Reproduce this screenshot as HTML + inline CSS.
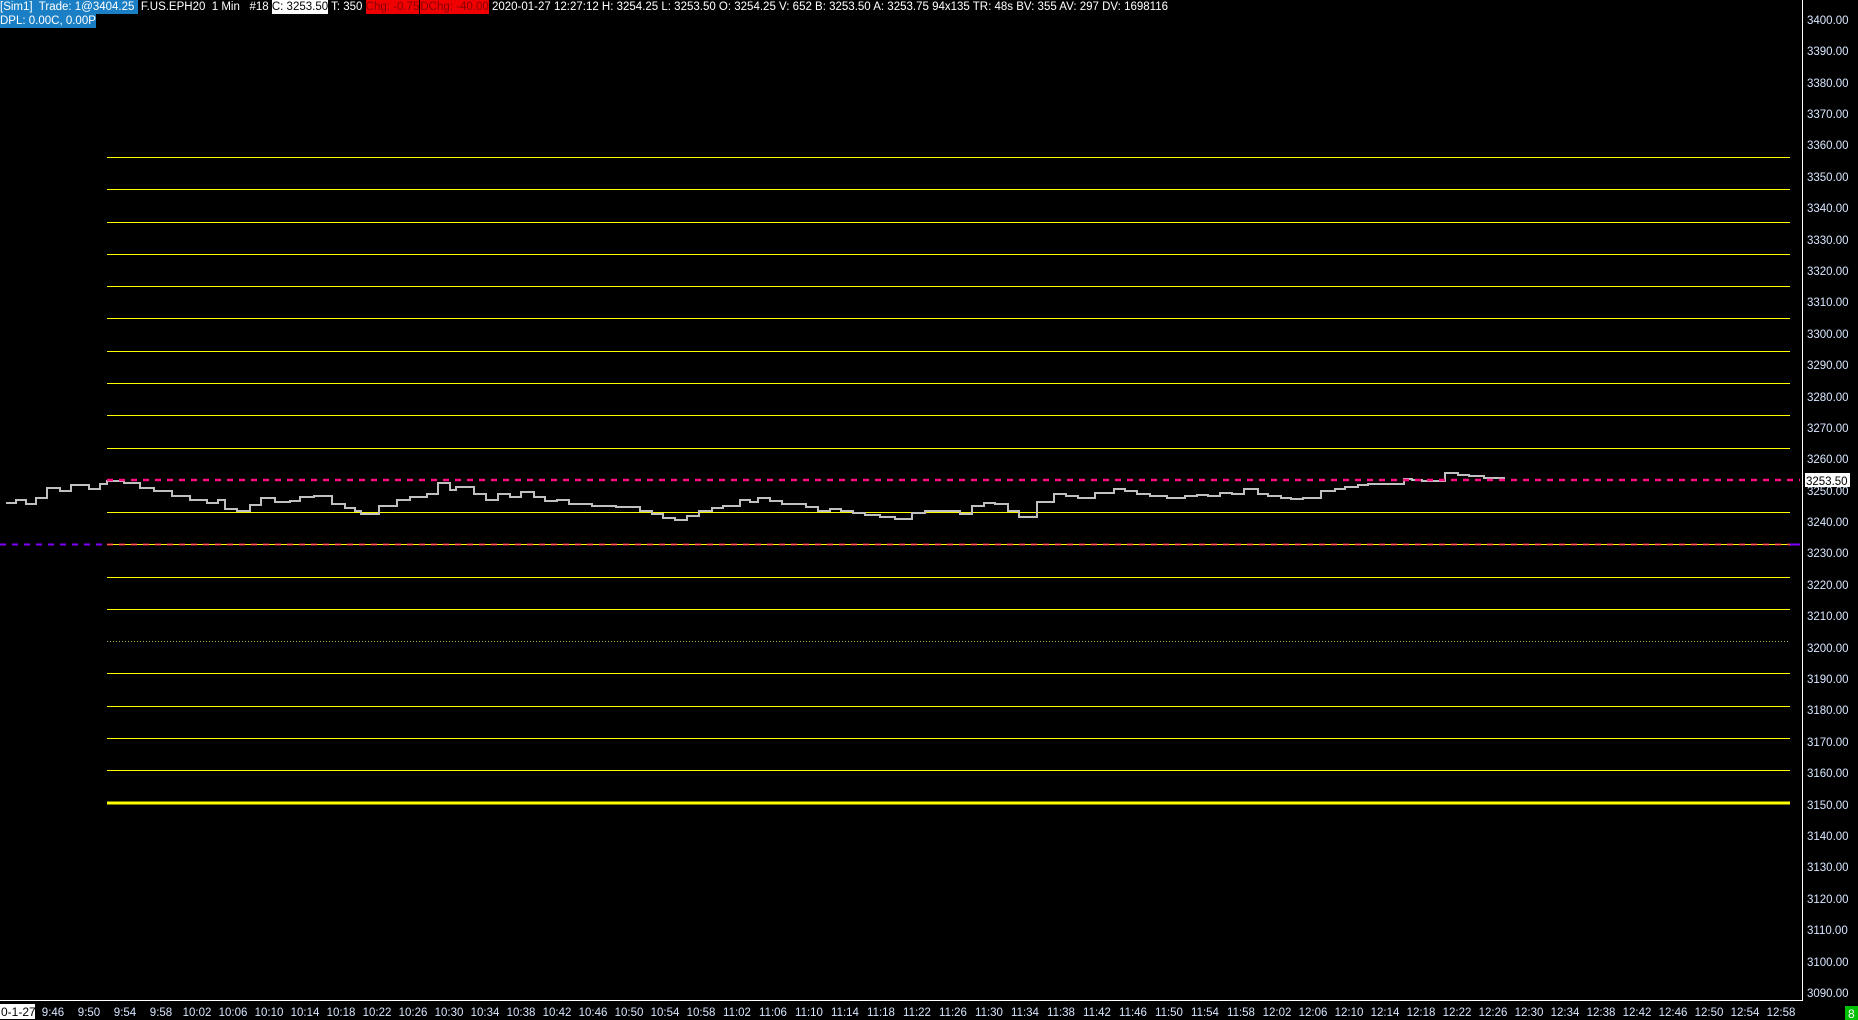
<!DOCTYPE html>
<html><head><meta charset="utf-8"><style>
html,body{margin:0;padding:0;background:#000;width:1858px;height:1020px;overflow:hidden}
svg{display:block}
text{font-family:"Liberation Sans",sans-serif}
.hd{position:absolute;left:0;top:0;font:11.5px "Liberation Sans",sans-serif;color:#fff;white-space:pre;line-height:14px}
.hd span{display:inline-block}
.b{background:#1a7fc4}
.w{background:#fff;color:#000}
.r{background:#f00000;color:#8a0000}
</style></head><body>
<svg width="1858" height="1020" xmlns="http://www.w3.org/2000/svg">
<rect width="1858" height="1020" fill="#000"/>
<g stroke="#ffff00" stroke-width="1" shape-rendering="crispEdges">
<line x1="107" x2="1790" y1="157.5" y2="157.5"/>
<line x1="107" x2="1790" y1="189.5" y2="189.5"/>
<line x1="107" x2="1790" y1="222.5" y2="222.5"/>
<line x1="107" x2="1790" y1="254.5" y2="254.5"/>
<line x1="107" x2="1790" y1="286.5" y2="286.5"/>
<line x1="107" x2="1790" y1="318.5" y2="318.5"/>
<line x1="107" x2="1790" y1="351.5" y2="351.5"/>
<line x1="107" x2="1790" y1="383.5" y2="383.5"/>
<line x1="107" x2="1790" y1="415.5" y2="415.5"/>
<line x1="107" x2="1790" y1="448.5" y2="448.5"/>
<line x1="107" x2="1790" y1="512.5" y2="512.5"/>
<line x1="107" x2="1790" y1="544.5" y2="544.5"/>
<line x1="107" x2="1790" y1="577.5" y2="577.5"/>
<line x1="107" x2="1790" y1="609.5" y2="609.5"/>
<line x1="107" x2="1790" y1="641.5" y2="641.5" stroke="#b0b040" stroke-dasharray="1 2"/>
<line x1="107" x2="1790" y1="673.5" y2="673.5"/>
<line x1="107" x2="1790" y1="706.5" y2="706.5"/>
<line x1="107" x2="1790" y1="738.5" y2="738.5"/>
<line x1="107" x2="1790" y1="770.5" y2="770.5"/>
<line x1="107" x2="1790" y1="803" y2="803" stroke-width="3"/>
</g>
<line x1="107" x2="1795" y1="544.5" y2="544.5" stroke="#ff3060" stroke-width="2" stroke-dasharray="6 6" opacity="0.8"/>
<line x1="0" x2="107" y1="544.5" y2="544.5" stroke="#8000ff" stroke-width="2" stroke-dasharray="6 6"/>
<line x1="1790" x2="1800" y1="544.5" y2="544.5" stroke="#8000ff" stroke-width="2"/>
<path d="M6 503H16V500H26V504H36V498H47V488H60V491H71V485H89V489H100V484H107V481H124V483H140V488H154V491H172V496H190V500H207V503H218V500H225V509H237V511H250V505H261V498H275V502H290V501H300V497H314V496H332V504H345V508H355V511H361V514H379V506H397V500H410V497H427V494H438V483H450V490H456V487H474V494H486V500H498V494H510V497H521V492H534V497H545V501H557V500H569V504H592V506H616V507H640V511H652V514H663V518H675V520H687V516H699V511H712V508H723V506H740V500H750V502H758V498H770V501H782V504H806V507H818V511H830V509H841V511H853V513H865V515H880V517H895V519H912V513H925V511H936V511H960V514H972V506H984V503H995V504H1008V511H1019V517H1037V502H1054V494H1066V496H1078V498H1095V493H1114V489H1125V491H1137V494H1150V496H1167V498H1185V496H1197V495H1208V496H1220V493H1232V494H1244V489H1258V494H1268V496H1281V498H1291V499H1303V498H1321V491H1335V489H1345V487H1358V485H1368V484H1392V484H1404V479H1412V480H1422V481H1445V473H1458V475H1469V476H1484V478H1499V478H1505" fill="none" stroke="#c0c0c0" stroke-width="2"/>
<line x1="107" x2="1800" y1="480" y2="480" stroke="#ff0a80" stroke-width="2.5" stroke-dasharray="6 6"/>
<line x1="1802.5" x2="1802.5" y1="0" y2="1000" stroke="#fff" stroke-width="1"/>
<line x1="0" x2="1803" y1="1000.5" y2="1000.5" stroke="#fff" stroke-width="1"/>
<g fill="#d8e6ff" font-size="11.5">
<text x="1807" y="24">3400.00</text><text x="1807" y="55">3390.00</text><text x="1807" y="87">3380.00</text><text x="1807" y="118">3370.00</text><text x="1807" y="149">3360.00</text><text x="1807" y="181">3350.00</text><text x="1807" y="212">3340.00</text><text x="1807" y="244">3330.00</text><text x="1807" y="275">3320.00</text><text x="1807" y="306">3310.00</text><text x="1807" y="338">3300.00</text><text x="1807" y="369">3290.00</text><text x="1807" y="401">3280.00</text><text x="1807" y="432">3270.00</text><text x="1807" y="463">3260.00</text><text x="1807" y="495">3250.00</text><text x="1807" y="526">3240.00</text><text x="1807" y="557">3230.00</text><text x="1807" y="589">3220.00</text><text x="1807" y="620">3210.00</text><text x="1807" y="652">3200.00</text><text x="1807" y="683">3190.00</text><text x="1807" y="714">3180.00</text><text x="1807" y="746">3170.00</text><text x="1807" y="777">3160.00</text><text x="1807" y="809">3150.00</text><text x="1807" y="840">3140.00</text><text x="1807" y="871">3130.00</text><text x="1807" y="903">3120.00</text><text x="1807" y="934">3110.00</text><text x="1807" y="966">3100.00</text><text x="1807" y="997">3090.00</text>
</g>
<rect x="1805" y="473" width="45" height="14" fill="#fff"/>
<text x="1806" y="485" font-size="11.5" fill="#000">3253.50</text>
<rect x="1845" y="1006" width="13" height="14" fill="#00c000"/>
<text x="1848" y="1018" font-size="12" fill="#fff">8</text>
<rect x="0" y="1004" width="35" height="15" fill="#fff"/>
<text x="1" y="1016" font-size="12" fill="#000">0-1-27</text>
<g fill="#d8e6ff" font-size="11.5" text-anchor="middle">
<text x="53" y="1016">9:46</text><text x="89" y="1016">9:50</text><text x="125" y="1016">9:54</text><text x="161" y="1016">9:58</text><text x="197" y="1016">10:02</text><text x="233" y="1016">10:06</text><text x="269" y="1016">10:10</text><text x="305" y="1016">10:14</text><text x="341" y="1016">10:18</text><text x="377" y="1016">10:22</text><text x="413" y="1016">10:26</text><text x="449" y="1016">10:30</text><text x="485" y="1016">10:34</text><text x="521" y="1016">10:38</text><text x="557" y="1016">10:42</text><text x="593" y="1016">10:46</text><text x="629" y="1016">10:50</text><text x="665" y="1016">10:54</text><text x="701" y="1016">10:58</text><text x="737" y="1016">11:02</text><text x="773" y="1016">11:06</text><text x="809" y="1016">11:10</text><text x="845" y="1016">11:14</text><text x="881" y="1016">11:18</text><text x="917" y="1016">11:22</text><text x="953" y="1016">11:26</text><text x="989" y="1016">11:30</text><text x="1025" y="1016">11:34</text><text x="1061" y="1016">11:38</text><text x="1097" y="1016">11:42</text><text x="1133" y="1016">11:46</text><text x="1169" y="1016">11:50</text><text x="1205" y="1016">11:54</text><text x="1241" y="1016">11:58</text><text x="1277" y="1016">12:02</text><text x="1313" y="1016">12:06</text><text x="1349" y="1016">12:10</text><text x="1385" y="1016">12:14</text><text x="1421" y="1016">12:18</text><text x="1457" y="1016">12:22</text><text x="1493" y="1016">12:26</text><text x="1529" y="1016">12:30</text><text x="1565" y="1016">12:34</text><text x="1601" y="1016">12:38</text><text x="1637" y="1016">12:42</text><text x="1673" y="1016">12:46</text><text x="1709" y="1016">12:50</text><text x="1745" y="1016">12:54</text><text x="1781" y="1016">12:58</text>
</g>
</svg>
<div class="hd"><span class="b">[Sim1]  Trade: 1@3404.25 </span><span> F.US.EPH20  1 Min   #18 </span><span class="w">C: 3253.50</span><span> T: 350 </span><span class="r">Chg: -0.75</span><span class="r" style="margin-left:1px">DChg: -40.00</span><span> 2020-01-27 12:27:12 H: 3254.25 L: 3253.50 O: 3254.25 V: 652 B: 3253.50 A: 3253.75 94x135 TR: 48s BV: 355 AV: 297 DV: 1698116</span><br><span class="b">DPL: 0.00C, 0.00P</span></div>
</body></html>
